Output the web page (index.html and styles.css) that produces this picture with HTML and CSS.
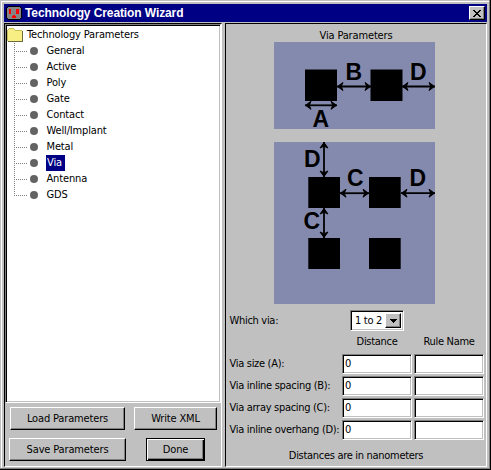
FILE: index.html
```html
<!DOCTYPE html>
<html lang="en">
<head>
<meta charset="utf-8">
<title>Technology Creation Wizard</title>
<link rel="stylesheet" href="styles.css">
</head>
<body>
<div class="window">
  <header class="titlebar">
    <svg class="app-icon" width="16" height="16" viewBox="0 -1 16 16" shape-rendering="crispEdges">
      <path d="M2 0H14V1H15V2H16V12H15V13H14V14H2V13H1V12H0V2H1V1H2Z" fill="#000"/>
      <path d="M2 1H14V2H15V12H14V13H2V12H1V2H2Z" fill="#848484"/>
      <path d="M3 3H5V8H3ZM10 3H13V8H10ZM7 9H9V10H10V12H6V10H7Z" fill="#f00"/>
    </svg>
    <h1>Technology Creation Wizard</h1>
    <button class="close" aria-label="Close">
      <svg width="8" height="7" viewBox="0 0 8 7" shape-rendering="crispEdges"><path d="M0 0H2V1H3V2H5V1H6V0H8V1H7V2H6V3H5V4H6V5H7V6H8V7H6V6H5V5H3V6H2V7H0V6H1V5H2V4H3V3H2V2H1V1H0Z"/></svg>
    </button>
  </header>
  <main class="panes">
    <section class="left">
      <div class="tree">
        <div class="root">
          <svg width="16" height="14" viewBox="0 0 16 14" shape-rendering="crispEdges">
            <path d="M1 2H2V1H7V2H8V3H15V13H1Z" fill="#f7ef84"/>
            <path d="M0 2H1V13H0ZM1 1H2V2H1ZM2 0H7V1H2ZM7 1H8V2H7ZM8 2H15V3H8Z" fill="#c6bd5a"/>
            <path d="M15 3H16V14H1V13H15Z" fill="#6b6b42"/>
          </svg>
          <span>Technology Parameters</span>
        </div>
        <ul>
          <li><i></i><span>General</span></li>
          <li><i></i><span>Active</span></li>
          <li><i></i><span>Poly</span></li>
          <li><i></i><span>Gate</span></li>
          <li><i></i><span>Contact</span></li>
          <li><i></i><span>Well/Implant</span></li>
          <li><i></i><span>Metal</span></li>
          <li><i></i><span class="selected">Via</span></li>
          <li><i></i><span>Antenna</span></li>
          <li><i></i><span>GDS</span></li>
        </ul>
      </div>
      <div class="buttons">
        <button class="btn load">Load Parameters</button>
        <button class="btn write">Write XML</button>
        <button class="btn save">Save Parameters</button>
        <button class="btn done">Done</button>
      </div>
    </section>
    <section class="right">
      <h2>Via Parameters</h2>
      <svg class="fig fig-inline" width="161" height="87" viewBox="274 42 161 87">
        <defs>
          <marker id="tip" viewBox="0 0 9 12" refX="8" refY="6" markerWidth="9" markerHeight="12" markerUnits="userSpaceOnUse" orient="auto-start-reverse"><path d="M2 2L7.500 6L2 10L3.800 6Z"/></marker>
        </defs>
        <rect x="274" y="42" width="161" height="87" fill="#848aad"/>
        <path d="M305 69.500h32v31.500h-32zM370.500 69.500h32v31.500h-32z"/>
        <g class="arrows"><path d="M337 86.500H371"/><path d="M402 86.500H435"/><path d="M305 105.300H337"/></g>
        <g class="letters"><text x="345.500" y="80">B</text><text x="410" y="80">D</text><text x="312.500" y="127">A</text></g>
      </svg>
      <svg class="fig fig-array" width="161" height="162" viewBox="274 142 161 162">
        <rect x="274" y="142" width="161" height="162" fill="#848aad"/>
        <path d="M308.300 177h31.700v31h-31.700zM369 177h31.700v31h-31.700zM308.300 238h31.700v31h-31.700zM369 238h31.700v31h-31.700z"/>
        <g class="arrows"><path d="M340 193.200H369"/><path d="M401 193.200H435"/><path d="M324 142V177"/><path d="M324 208V238"/></g>
        <g class="letters"><text x="304" y="166.500">D</text><text x="347" y="185.500">C</text><text x="409.500" y="185.500">D</text><text x="303.500" y="229">C</text></g>
      </svg>
      <div class="which"><label>Which via:</label>
        <div class="select"><span>1 to 2</span><b><svg width="7" height="4" viewBox="0 0 7 4" shape-rendering="crispEdges"><path d="M0 0H7V1H6V2H5V3H4V4H3V3H2V2H1V1H0Z"/></svg></b></div>
      </div>
      <div class="heads"><span></span><span>Distance</span><span>Rule Name</span></div>
      <div class="row"><label>Via size (A):</label><div class="field">0</div><div class="field"></div></div>
      <div class="row"><label>Via inline spacing (B):</label><div class="field">0</div><div class="field"></div></div>
      <div class="row"><label>Via array spacing (C):</label><div class="field">0</div><div class="field"></div></div>
      <div class="row"><label>Via inline overhang (D):</label><div class="field">0</div><div class="field"></div></div>
      <p class="note">Distances are in nanometers</p>
    </section>
  </main>
</div>
</body>
</html>
```

FILE: styles.css
```css
* { box-sizing: border-box; }
body { margin: 0; overflow: hidden; font: 11px/16px "DejaVu Sans Condensed", "DejaVu Sans", sans-serif; font-stretch: condensed; letter-spacing: -.3px; color: #000; }
button { font: inherit; letter-spacing: inherit; color: inherit; padding: 0; }
.window { width: 491px; height: 470px; background: #c0c0c0; border-right: 1px solid #000; border-bottom: 1px solid #000; box-shadow: inset -1px -1px #808080, inset 1px 1px #c0c0c0, inset 2px 2px #fff; padding: 4px 3px 2px 4px; }
.titlebar { height: 18px; display: flex; align-items: center; background: #000084; color: #fff; padding: 0 2px; }
.app-icon { display: block; }
h1 { margin: 0 auto 0 3px; font: bold 12px/18px "Liberation Sans", sans-serif; letter-spacing: -.1px; white-space: nowrap; }
.close { display: grid; place-items: center; width: 16px; height: 14px; background: #c0c0c0; border: 1px solid; border-color: #fff #000 #000 #fff; box-shadow: inset -1px -1px #808080; }
.panes { display: flex; margin-top: 1px; height: 444px; }
.left { width: 218px; border: 1px solid; border-color: #000 #fff #fff #000; letter-spacing: -.15px; }
.tree { height: 379px; background: #fff; border: 1px solid; border-color: #808080 #fff #fff #808080; box-shadow: inset 1px 1px #000, inset -1px -1px #c0c0c0; padding: 2px 0 0 1px; }
.root { display: flex; height: 16px; align-items: center; gap: 4px; }
ul { list-style: none; margin: 0; padding: 0 0 0 7px; }
li { display: flex; align-items: center; height: 16px; background: repeating-linear-gradient(90deg, #808080 0 1px, transparent 1px 2px) 0 8px / 14px 1px no-repeat, repeating-linear-gradient(#808080 0 1px, transparent 1px 2px) 0 0 / 1px 100% no-repeat; }
li:last-child { background-size: 14px 1px, 1px 8px; }
i { width: 8px; height: 8px; border-radius: 4px; background: #636363; margin: 0 8px 0 16px; }
li span { padding: 0 1px 0 .5px; line-height: 16px; }
li .selected { background: #000084; color: #fff; padding: 0 3px 0 1px; }
.buttons { display: grid; grid-template-columns: 123px 1fr; grid-template-rows: 31px 31px; justify-items: center; align-items: center; padding-left: 1px; margin-right: -1px; }
.btn { height: 23px; background: #c0c0c0; border: 1px solid; border-color: #fff #000 #000 #fff; box-shadow: inset -1px -1px #808080; }
.load { width: 115px; }
.save { width: 117px; }
.write { width: 83px; }
.done { width: 59px; border-color: #000; box-shadow: inset 1px 1px #fff, inset -1px -1px #000, inset -2px -2px #808080; }
.right { width: 262px; margin-left: 3px; border: 1px solid; border-color: #000 #fff #fff #000; display: flex; flex-direction: column; }
h2 { font: inherit; margin: 4px 0 0; height: 14px; text-align: center; letter-spacing: -.15px; }
.fig { display: block; margin-left: 48px; flex: none; overflow: visible; }
.fig-array { margin-top: 13px; }
.arrows path { stroke: #000; stroke-width: 1.8; marker-start: url(#tip); marker-end: url(#tip); }
marker path { stroke: #000; stroke-width: 1; }
.letters { font: bold 23px "Liberation Sans", sans-serif; letter-spacing: 0; }
.which { display: flex; align-items: center; height: 21px; margin: 6px 0 0 3px; justify-content: space-between; padding: 0 82px 0 .5px; }
.select { width: 54px; height: 21px; display: flex; background: #fff; border: 1px solid; border-color: #808080 #fff #fff #808080; box-shadow: inset 1px 1px #000, inset -1px -1px #c0c0c0; padding: 2px; }
.select span { width: 32px; padding-left: 2px; }
.select b { flex: 1; display: grid; place-items: center; background: #c0c0c0; border: 1px solid; border-color: #fff #000 #000 #fff; box-shadow: inset -1px -1px #808080; }
.heads, .row { display: grid; grid-template-columns: 111px 70px 70px; column-gap: 2px; margin-left: 3px; }
.heads { height: 22px; line-height: 22px; text-align: center; }
.row { height: 22px; align-items: center; }
.row label { white-space: nowrap; padding-left: .5px; }
.field { height: 20px; background: #fff; border: 1px solid; border-color: #808080 #fff #fff #808080; box-shadow: inset 1px 1px #000, inset -1px -1px #c0c0c0; padding: 1px 2px; }
.note { margin: 7px 0 0; text-align: center; }
```
